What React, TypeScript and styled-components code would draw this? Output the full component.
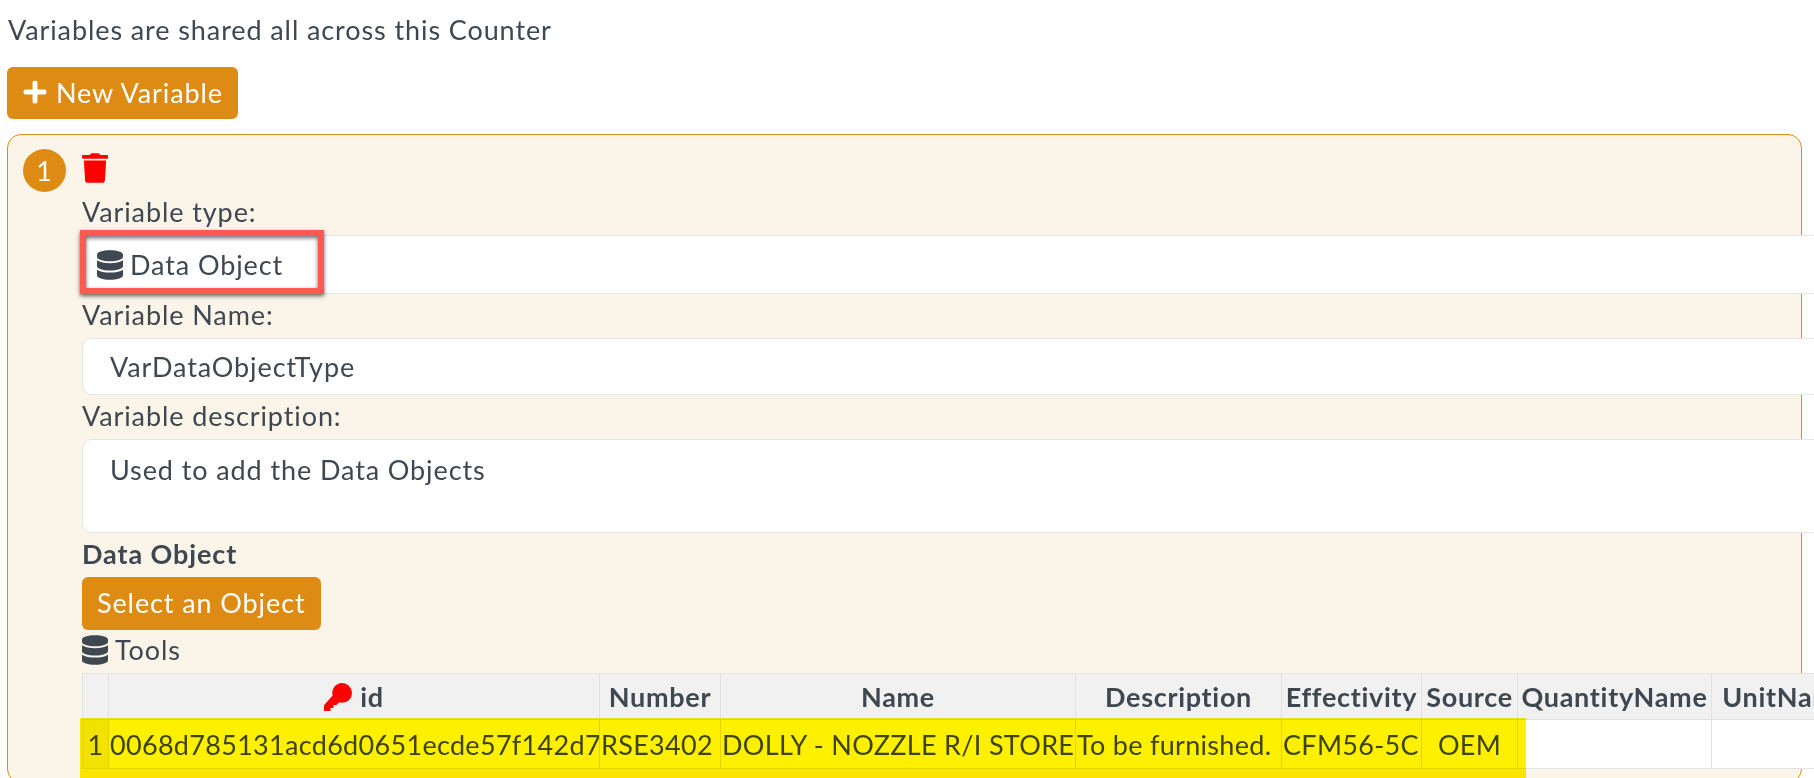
import { createGlobalStyle } from 'styled-components';
import styled from 'styled-components';
import { FaDatabase, FaPlus, FaTrash } from 'react-icons/fa';

const GlobalStyle = createGlobalStyle`
  html, body {
    margin: 0;
    padding: 0;
    background: #fff;
    overflow: hidden;
  }
  body {
    font-family: Lato, "Open Sans", sans-serif;
    font-size: 27px;
    letter-spacing: 0.9px;
    color: #3f4850;
  }
`;

const Page = styled.div`
  position: relative;
  width: 1814px;
  height: 778px;
  overflow: hidden;
  padding: 0 12px 0 7px;
  box-sizing: border-box;
`;

const Intro = styled.p`
  margin: 0;
  padding: 14px 0 0 1px;
  height: 67px;
  box-sizing: border-box;
  line-height: 32px;
`;

const Button = styled.button`
  display: flex;
  align-items: center;
  gap: 8px;
  height: ${(p) => (p.$tall ? 53 : 52)}px;
  padding: 0 15px 2px;
  border: none;
  border-radius: 6px;
  background: #de8b14;
  color: #fff;
  font: inherit;
  letter-spacing: inherit;
`;

const Panel = styled.div`
  display: flex;
  margin-top: 15px;
  height: 649px;
  box-sizing: border-box;
  border: 1px solid #e08c14;
  border-radius: 14px;
  background: #fbf4e9;
  padding: 14px 0 0 15px;
`;

const Badge = styled.div`
  flex: none;
  width: 43px;
  height: 43px;
  border-radius: 50%;
  background: #de8b14;
  color: #fff;
  display: flex;
  align-items: center;
  justify-content: center;
`;

const Body = styled.div`
  flex: none;
  width: 1900px;
  margin-left: 16px;
`;

const TrashIcon = styled(FaTrash)`
  display: block;
  width: 26px;
  height: 30px;
  margin: 4px 0 8px;
  color: #ff0000;
`;

const Label = styled.div`
  height: 44px;
  line-height: 42px;
`;

const Field = styled.div`
  display: flex;
  align-items: ${(p) => (p.$area ? 'flex-start' : 'center')};
  gap: 7px;
  height: ${(p) => p.$h}px;
  box-sizing: border-box;
  padding: ${(p) => (p.$area ? '14px' : '0')} 0 0 ${(p) => p.$pad}px;
  background: #fff;
  border: 1px solid #e6e6e6;
  border-radius: 10px;
  line-height: 32px;
`;

const DbIcon = styled(FaDatabase)`
  flex: none;
  width: 26px;
  height: 30px;
`;

const Heading = styled.div`
  font-weight: 700;
  height: 44px;
  line-height: 42px;
`;

const ToolsRow = styled.div`
  display: flex;
  align-items: center;
  gap: 7px;
  height: 43px;
  padding-bottom: 4px;
  box-sizing: border-box;
`;

const Table = styled.table`
  table-layout: fixed;
  width: 1779px;
  border-collapse: collapse;
  font-size: 27px;
`;

const Col = styled.col`
  width: ${(p) => p.$w}px;
`;

const Th = styled.th`
  height: 45px;
  padding: 0 2px;
  background: #f1f1f1;
  border: 1px solid #e2e2e2;
  font-weight: 700;
  letter-spacing: 0.7px;
  text-align: center;
  white-space: nowrap;
  overflow: hidden;
`;

const Td = styled.td`
  height: 48px;
  padding: 0 1px;
  background: ${(p) => (p.$index ? '#f1f1f1' : '#fff')};
  border: 1px solid #e2e2e2;
  letter-spacing: 0.3px;
  text-align: ${(p) => (p.$center ? 'center' : 'left')};
  white-space: nowrap;
  overflow: hidden;
`;

const KeySvg = styled.svg`
  width: 28px;
  height: 28px;
  fill: #ff0000;
  vertical-align: -4px;
  margin-right: 8px;
`;

/* annotations drawn over the screenshot */
const RedBox = styled.div`
  position: absolute;
  left: 80px;
  top: 230px;
  width: 244px;
  height: 64px;
  box-sizing: border-box;
  border: 6px solid #ff5a52;
  box-shadow: 0 2px 4px rgba(0, 0, 0, 0.6), inset 0 2px 4px rgba(0, 0, 0, 0.6);
`;

const Highlight = styled.div`
  position: absolute;
  left: 80px;
  top: 718px;
  width: 1446px;
  height: 60px;
  background: #fff000;
  mix-blend-mode: multiply;
`;

const columns = [26, 491, 121, 355, 206, 140, 96, 194, 150];

const headers = ['Number', 'Name', 'Description', 'Effectivity', 'Source', 'QuantityName', 'UnitName'];

export default function App() {
  return (
    <Page>
      <GlobalStyle />
      <Intro>Variables are shared all across this Counter</Intro>
      <Button>
        <FaPlus size={26} />
        New Variable
      </Button>
      <Panel>
        <Badge>1</Badge>
        <Body>
          <TrashIcon />
          <Label>Variable type:</Label>
          <Field $h={59} $pad={14}>
            <DbIcon />
            Data Object
          </Field>
          <Label>Variable Name:</Label>
          <Field $h={57} $pad={27}>VarDataObjectType</Field>
          <Label>Variable description:</Label>
          <Field $area $h={94} $pad={27}>Used to add the Data Objects</Field>
          <Heading>Data Object</Heading>
          <Button $tall>Select an Object</Button>
          <ToolsRow>
            <DbIcon />
            Tools
          </ToolsRow>
          <Table>
            <colgroup>
              {columns.map((w, i) => (
                <Col key={i} $w={w} />
              ))}
            </colgroup>
            <thead>
              <tr>
                <Th />
                <Th>
                  <KeySvg viewBox="0 0 24 24">
                    <path d="M15.5 0a8.5 8.5 0 0 1 0 17c-.8 0-1.6-.1-2.3-.4L10.5 19H8v2.5H5.5V24H0v-5l7.4-8.2A8.5 8.5 0 0 1 15.5 0z" />
                  </KeySvg>
                  id
                </Th>
                {headers.map((h) => (
                  <Th key={h}>{h}</Th>
                ))}
              </tr>
            </thead>
            <tbody>
              <tr>
                <Td $index $center>1</Td>
                <Td>0068d785131acd6d0651ecde57f142d7</Td>
                <Td>RSE3402</Td>
                <Td>DOLLY - NOZZLE R/I STORE</Td>
                <Td>To be furnished.</Td>
                <Td>CFM56-5C</Td>
                <Td $center>OEM</Td>
                <Td />
                <Td />
              </tr>
            </tbody>
          </Table>
        </Body>
      </Panel>
      <RedBox />
      <Highlight />
    </Page>
  );
}
